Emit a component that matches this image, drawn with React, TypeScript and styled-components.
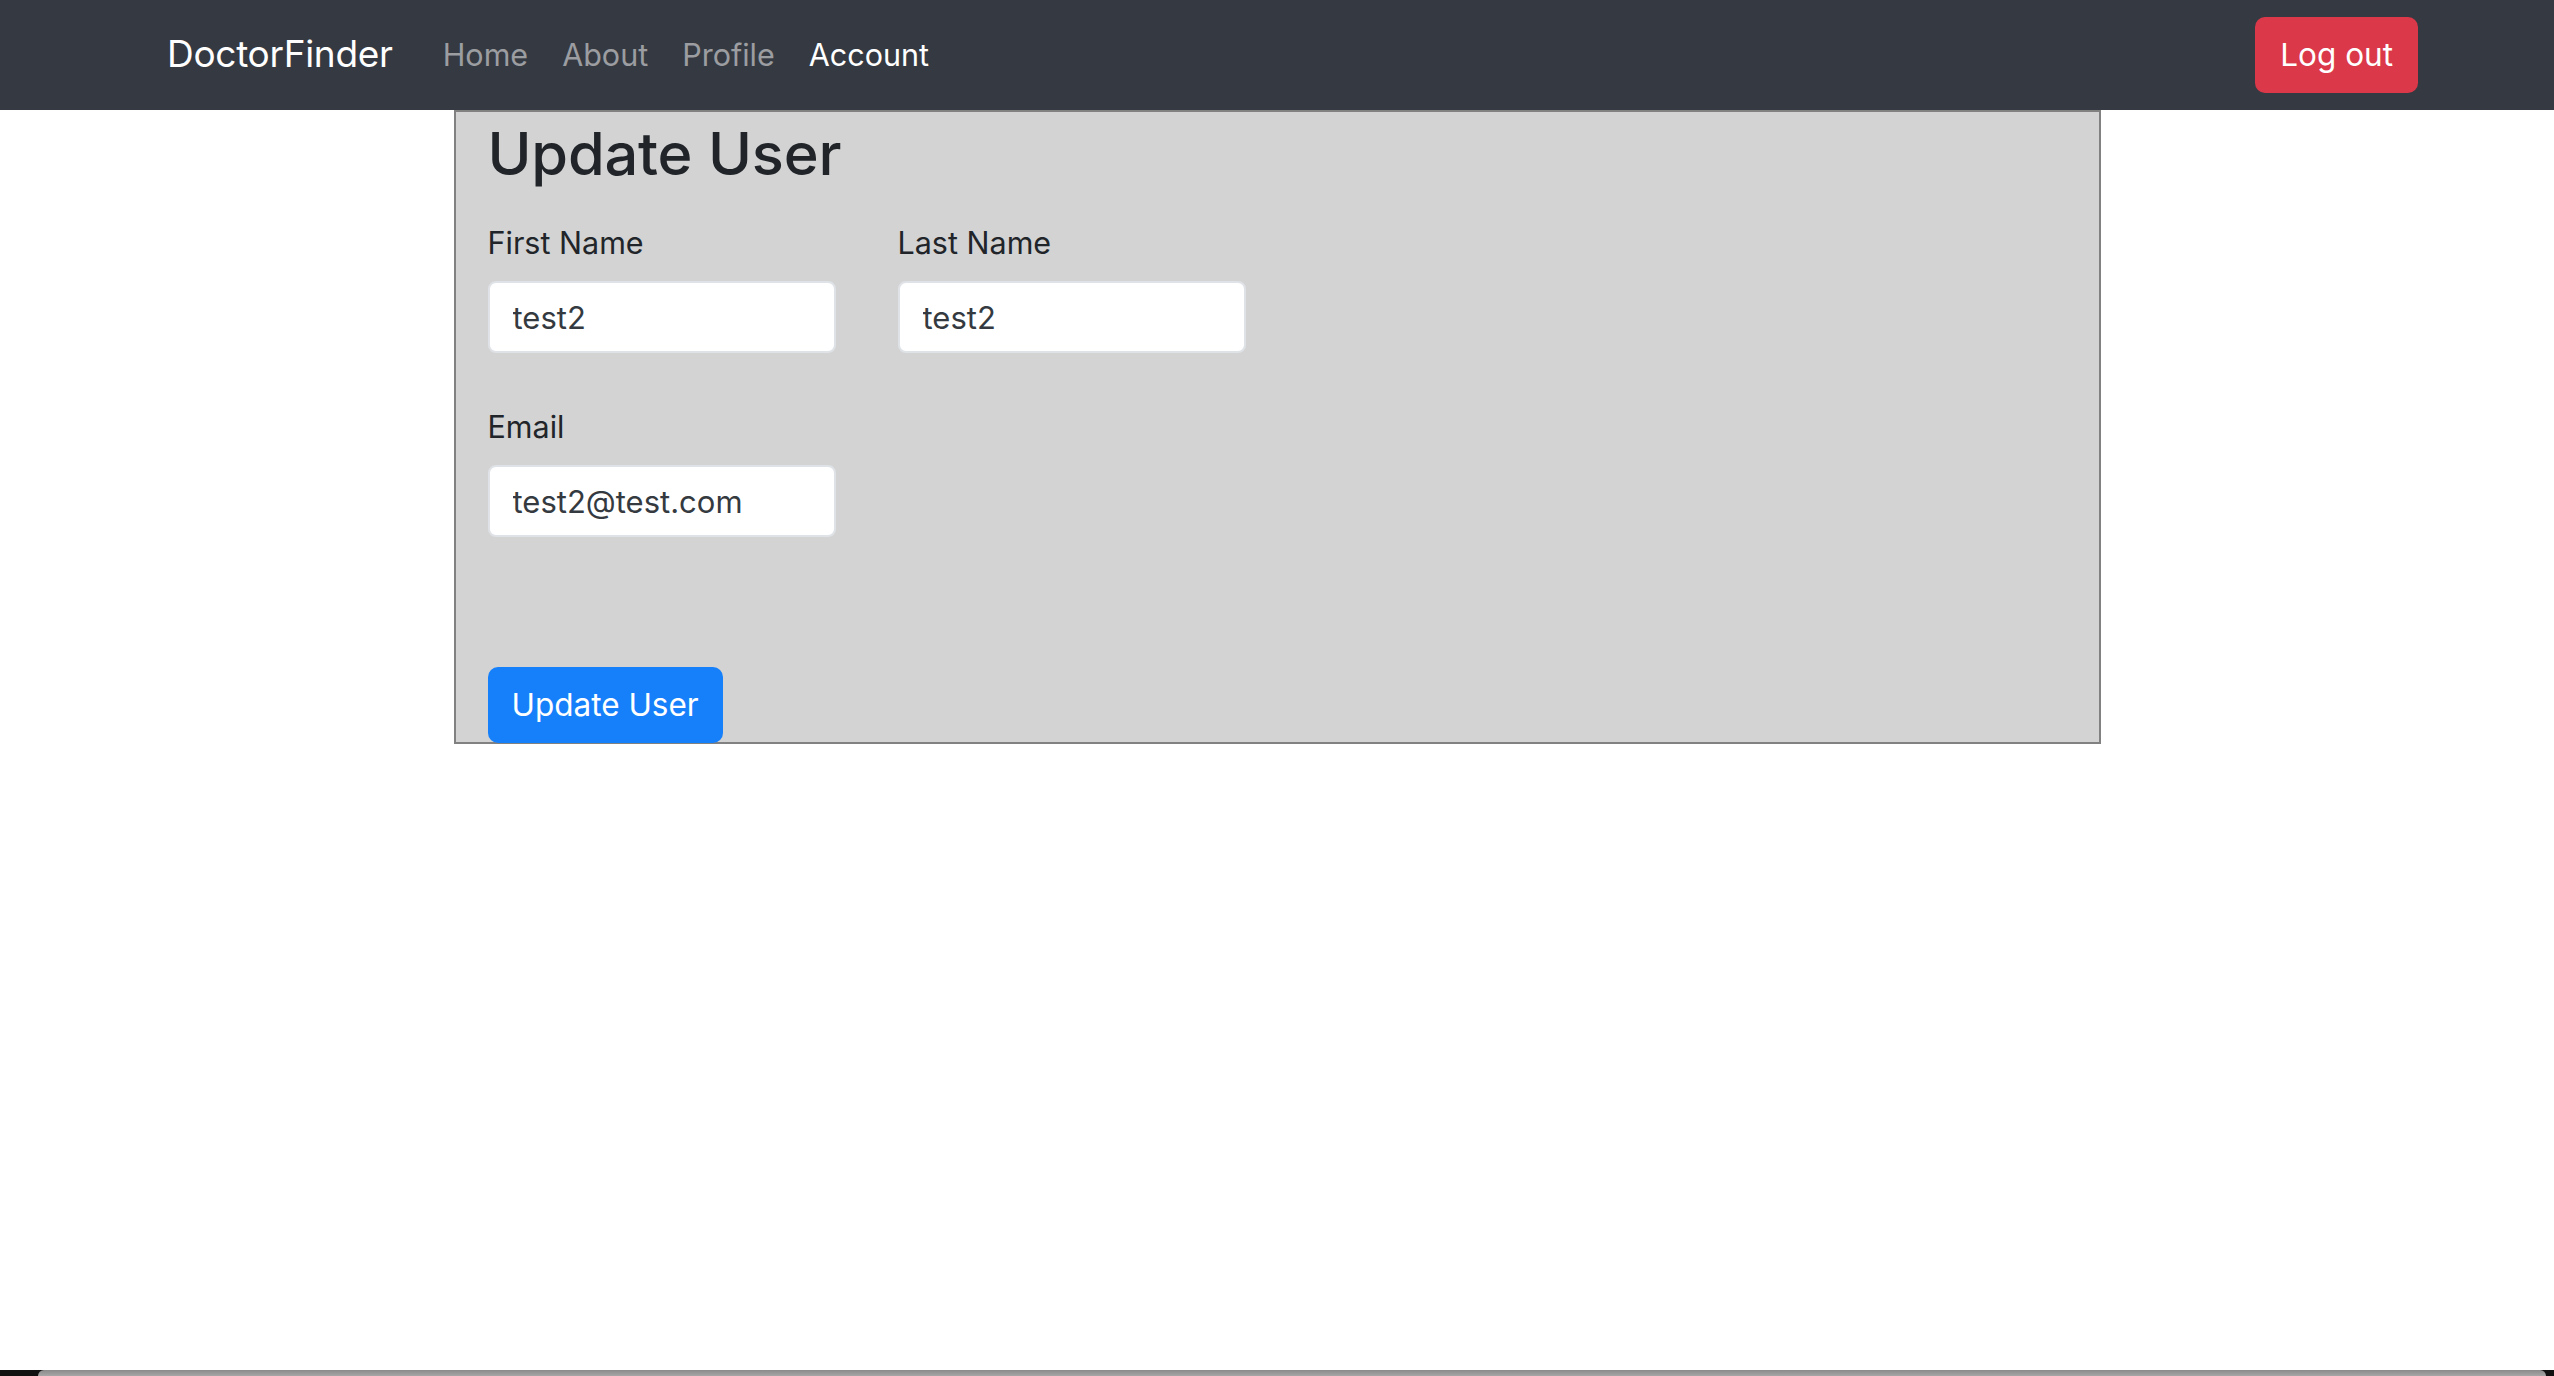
import React from "react";
import styled, { createGlobalStyle } from "styled-components";

const GlobalStyle = createGlobalStyle`
  html, body {
    margin: 0;
    padding: 0;
    background: #ffffff;
    font-family: Inter, "Noto Sans", "Liberation Sans", sans-serif;
    color: #212529;
  }
  * { box-sizing: border-box; }
`;

const Page = styled.div`
  min-height: 100vh;
  display: flex;
  flex-direction: column;
  background: #ffffff;
`;

const Navbar = styled.nav`
  height: 110px;
  flex: 0 0 auto;
  background: #353a42;
  display: flex;
  align-items: center;
  padding: 0 136px 0 167px;
`;

const Brand = styled.a`
  font-size: 37px;
  line-height: 1.2;
  color: #ffffff;
  text-decoration: none;
  letter-spacing: -0.3px;
  margin-right: 33px;
  margin-top: -2px;
`;

const NavList = styled.ul`
  display: flex;
  list-style: none;
  margin: 0;
  padding: 0;
`;

const NavLink = styled.a<{ $active?: boolean }>`
  display: block;
  padding: 0 17px;
  font-size: 30.5px;
  line-height: 1.5;
  color: ${(p) => (p.$active ? "#ffffff" : "#9b9da1")};
  text-decoration: none;
`;

const LogoutButton = styled.button`
  margin-left: auto;
  height: 76px;
  padding: 0 25px;
  border: none;
  border-radius: 10px;
  background: #db3849;
  color: #ffffff;
  font-family: inherit;
  font-size: 31.5px;
  line-height: 1;
  cursor: pointer;
`;

const Main = styled.main`
  display: flex;
  justify-content: center;
`;

const Card = styled.section`
  width: 1647px;
  background: #d3d3d3;
  border: 2px solid #818181;
  padding: 6px 32px 0 32px;
  display: flex;
  flex-direction: column;
  align-items: flex-start;
`;

const Title = styled.h2`
  margin: 0 0 32px 0;
  font-size: 59.5px;
  line-height: 70px;
  font-weight: 500;
  letter-spacing: -0.2px;
  color: #212529;
`;

const Row = styled.div<{ $gapAfter: number }>`
  display: grid;
  grid-template-columns: repeat(2, 348px);
  column-gap: 62px;
  margin-bottom: ${(p) => p.$gapAfter}px;
`;

const Field = styled.div`
  display: flex;
  flex-direction: column;
`;

const Label = styled.label`
  font-size: 30.5px;
  line-height: 45px;
  margin-bottom: 16px;
  color: #212529;
`;

const Input = styled.input`
  width: 348px;
  height: 72px;
  border: 2px solid #dfe2e6;
  border-radius: 8px;
  background: #ffffff;
  padding: 0 23px;
  font-family: inherit;
  font-size: 31px;
  color: #343a40;
  outline: none;
`;

const SubmitButton = styled.button`
  height: 76px;
  padding: 0 24px;
  border: none;
  border-radius: 10px;
  background: #1680fb;
  color: #ffffff;
  font-family: inherit;
  font-size: 31.5px;
  line-height: 1;
  cursor: pointer;
  margin-bottom: -1px;
`;

const WindowEdge = styled.div`
  margin-top: auto;
  height: 6px;
  background: #111111;
  display: flex;
  padding: 0 8px 0 38px;
`;

const EdgeBar = styled.div`
  flex: 1;
  background: linear-gradient(#8a8a8a, #a6a6a6);
  border-top-left-radius: 6px;
  border-top-right-radius: 6px;
`;

export default function App() {
  return (
    <Page>
      <GlobalStyle />
      <Navbar>
        <Brand href="#">DoctorFinder</Brand>
        <NavList>
          <li><NavLink href="#">Home</NavLink></li>
          <li><NavLink href="#">About</NavLink></li>
          <li><NavLink href="#">Profile</NavLink></li>
          <li><NavLink href="#" $active>Account</NavLink></li>
        </NavList>
        <LogoutButton>Log out</LogoutButton>
      </Navbar>
      <Main>
        <Card>
          <Title>Update User</Title>
          <Row $gapAfter={51}>
            <Field>
              <Label>First Name</Label>
              <Input defaultValue="test2" />
            </Field>
            <Field>
              <Label>Last Name</Label>
              <Input defaultValue="test2" />
            </Field>
          </Row>
          <Row $gapAfter={130}>
            <Field>
              <Label>Email</Label>
              <Input defaultValue="test2@test.com" />
            </Field>
          </Row>
          <SubmitButton>Update User</SubmitButton>
        </Card>
      </Main>
      <WindowEdge>
        <EdgeBar />
      </WindowEdge>
    </Page>
  );
}
